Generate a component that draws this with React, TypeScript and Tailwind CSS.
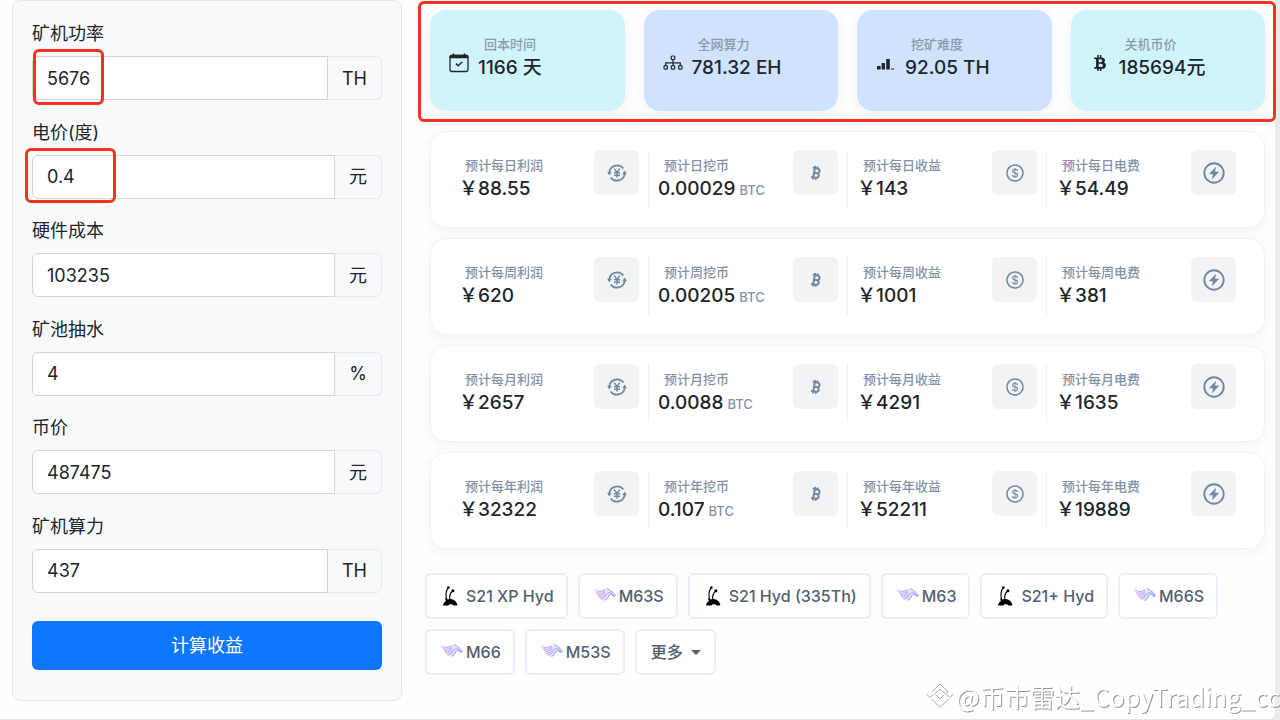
import { useState } from "react";
import type { ReactNode } from "react";
import { Bitcoin } from "lucide-react";
import { AiOutlineDollar } from "react-icons/ai";
import { FaBtc } from "react-icons/fa";

const CalendarIcon = () => (
	<svg viewBox="0 0 20 20" className="w-5 h-5" fill="none" stroke="currentColor">
		<rect x="1" y="2.5" width="18" height="16" rx="1.8" strokeWidth="1.3" />
		<path d="M.6 5.200V3.500Q.6 1.800 2.300 1.800h15.400q1.700 0 1.700 1.700v1.700z" fill="currentColor" stroke="none" />
		<path d="M4.500.6v2M15.500.6v2" strokeWidth="1.6" />
		<path d="m7 10.600 2.200 2.200L13.200 9" strokeWidth="1.5" />
	</svg>
);

const NetworkIcon = () => (
	<svg viewBox="0 0 20 20" className="w-5 h-5" fill="none" stroke="currentColor" strokeWidth="1.2">
		<rect x="8.2" y="3" width="3.6" height="3.6" rx="1" />
		<path d="M10 6.600v6M2.700 12.600V9.800h14.600v2.800" />
		<rect x="1" y="12.6" width="3.4" height="3.6" rx="1" />
		<rect x="8.3" y="12.6" width="3.4" height="3.6" rx="1" />
		<rect x="15.6" y="12.6" width="3.4" height="3.6" rx="1" />
	</svg>
);

const SignalIcon = () => (
	<svg viewBox="0 0 20 20" className="w-5 h-5" fill="currentColor">
		<path d="M1 13h3.600v3.500H1zM5.600 10H9v6.500H5.600zM10.200 6h3.600v10.500h-3.600zM15 15.500h3.200v1H15z" />
	</svg>
);

const YenCycleIcon = () => (
	<svg viewBox="0 0 20 20" className="w-5 h-5" fill="none" stroke="currentColor" strokeWidth="1.7">
		<path d="M2.300 10.500A7.800 7.800 0 0 1 16.400 5.600M17.700 9.500A7.800 7.800 0 0 1 3.600 14.400" />
		<path d="m.2 8.800 2 3.800L4.800 8.800zM19.800 11.200l-2-3.800-2.600 3.800z" fill="currentColor" stroke="none" />
		<path d="m7.200 5.600 2.800 3.800 2.800-3.800M10 9.400v5.200M7 9.800h6M7 12.200h6" strokeWidth="1.5" />
	</svg>
);

const PowerIcon = () => (
	<svg viewBox="0 0 22 22" className="w-[22px] h-[22px]" fill="none" stroke="currentColor">
		<circle cx="11" cy="11" r="9.7" strokeWidth="1.9" />
		<path d="M13 4.800 5.800 12.200h4.100L9 17.200l7.200-7.400h-4.100z" fill="currentColor" stroke="none" />
	</svg>
);

const AntLogo = () => (
	<svg viewBox="0 0 22 22" className="w-[22px] h-[22px] shrink-0" fill="none" stroke="#000">
		<path d="M7.200 2.800C4.800 5.500 4.400 9.500 5.600 15M11.700 6C9 8.200 8.300 11.500 8.800 15" strokeWidth="1.1" />
		<circle cx="7.4" cy="2.600" r="1.300" fill="#000" stroke="none" />
		<circle cx="11.900" cy="5.800" r="1.500" fill="#000" stroke="none" />
		<path
			d="M2 20.500c.2-2.200 1.500-3.800 3-4.600-.7-1-.9-2-.4-3.200 1 1.500 2.400 1.700 3.700 1.300 3.600-.4 7 1.800 8 5.600l-.2.900h-3.600c-1-1.600-4-1.800-5.300 0z"
			fill="#000"
			stroke="none"
		/>
	</svg>
);

const HorseLogo = () => (
	<svg viewBox="0 0 22 14" className="w-[22px] h-[14px] shrink-0 mb-1" fill="none" strokeWidth=".8">
		<defs>
			<linearGradient id="mane" x1="0" y1="0" x2="1" y2="0">
				<stop offset="0" stopColor="#d99bf0" />
				<stop offset="1" stopColor="#7f8df8" />
			</linearGradient>
		</defs>
		<path
			d="M.5 2.500C4 5 6.500 3.800 9.500 2l2-.8.8.8 1.700-1.500.2 2L18 3.800l1.500 2 2 2.400-1 1.500-3.300-2.100c-1.600-.4-2.300.8-3 2.500-.7 2.100-2.400 3.400-4.600 3.400C5.500 13.200 2.500 8.500.5 2.500z"
			fill="url(#mane)"
			fillOpacity=".25"
		/>
		<path
			d="M.5 2.500C4 5.500 8 4.700 11 3M1.600 5c3 2 6.600 1.600 9.400-.5M3 7.500c3 1.400 6 .6 8.500-1.600M4.500 9.700c3 .9 5.300 0 7-2.200M6.500 11.700c2.500.2 4.500-1 5.500-3.200 1-2.200 2.800-3.400 5-2.800l3.400 3.700"
			stroke="url(#mane)"
		/>
		<path d="M13 1.500 16.500 3.500 19 5.500l2.400 2.800-.9 1.400-3.300-2.200c-1.600-.4-2.300.8-3 2.500-.6 1.800-1.800 3-4 3.300" stroke="#8a97f8" strokeWidth=".9" />
	</svg>
);

const fields = [
	{ id: "power", label: "矿机功率", value: "5676", unit: "TH", mark: "left-px -top-[7px] w-[71px] h-[56px]" },
	{ id: "price", label: "电价(度)", value: "0.4", unit: "元", mark: "-left-[7px] -top-[7px] w-[91px] h-[55px]" },
	{ id: "hardware", label: "硬件成本", value: "103235", unit: "元" },
	{ id: "pool", label: "矿池抽水", value: "4", unit: "%" },
	{ id: "coin", label: "币价", value: "487475", unit: "元" },
	{ id: "hashrate", label: "矿机算力", value: "437", unit: "TH" },
];

const stats = [
	{ label: "回本时间", value: "1166 天", color: "bg-[#cff4fc]", icon: <CalendarIcon /> },
	{ label: "全网算力", value: "781.32 EH", color: "bg-[#cfe2ff]", icon: <NetworkIcon /> },
	{ label: "挖矿难度", value: "92.05 TH", color: "bg-[#cfe2ff]", icon: <SignalIcon /> },
	{ label: "关机币价", value: "185694元", color: "bg-[#cff4fc]", icon: <FaBtc className="w-5 h-4" /> },
];

const periods = [
	{ name: "日", each: "每日", profit: "88.55", coins: "0.00029", income: "143", cost: "54.49" },
	{ name: "周", each: "每周", profit: "620", coins: "0.00205", income: "1001", cost: "381" },
	{ name: "月", each: "每月", profit: "2657", coins: "0.0088", income: "4291", cost: "1635" },
	{ name: "年", each: "每年", profit: "32322", coins: "0.107", income: "52211", cost: "19889" },
];

const miners = [
	{ name: "S21 XP Hyd", ant: true },
	{ name: "M63S" },
	{ name: "S21 Hyd (335Th)", ant: true },
	{ name: "M63" },
	{ name: "S21+ Hyd", ant: true },
	{ name: "M66S" },
	{ name: "M66" },
	{ name: "M53S" },
];

const minerButton =
	"h-[46px] pl-[14px] pr-3 flex items-center rounded-md border-2 border-[#ececff] bg-white text-base font-medium text-[#506173]";

const Highlight = ({ className }: { className: string }) => (
	<span className={`absolute z-10 pointer-events-none rounded-md border-3 border-[#fc3020] ${className}`} />
);

type CellProps = { label: string; value: string; unit?: string; icon: ReactNode };

const Cell = ({ label, value, unit, icon }: CellProps) => (
	<div className="flex justify-between items-start pl-[9px] pr-[9px] border-r border-[#edf0f6] last:border-r-0 last:pr-[10px] h-[58px]">
		<div className="pt-[5px] whitespace-nowrap">
			<p className="pl-[6px] text-[13px] leading-5 font-medium text-[#8492a6]">{label}</p>
			<p className="text-[19px] leading-7 font-medium text-[#212529]">
				{value}
				{unit && <span className="ml-1 text-[13px] text-[#8492a6]">{unit}</span>}
			</p>
		</div>
		<span className="w-[45px] h-[45px] shrink-0 flex items-center justify-center rounded-md bg-[#f1f3f5] text-[#7188a2]">
			{icon}
		</span>
	</div>
);

const Calculator = () => {
	const [values, setValues] = useState<Record<string, string>>(
		Object.fromEntries(fields.map((f) => [f.id, f.value]))
	);

	return (
		<form
			onSubmit={(e) => e.preventDefault()}
			className="flex flex-col px-[19px] pt-[19px] pb-[30px] rounded-lg border border-[#e3e6ea] bg-[#f8f9fb]"
		>
			<div className="flex-1 flex flex-col justify-between">
				{fields.map((f) => (
					<div key={f.id}>
						<label htmlFor={f.id} className="block mb-2 text-lg leading-7 text-[#212529]">
							{f.label}
						</label>
						<div className="relative flex h-11 text-lg text-[#212529]">
							<input
								id={f.id}
								value={values[f.id]}
								onChange={(e) => setValues({ ...values, [f.id]: e.target.value })}
								className="flex-1 min-w-0 px-[14px] pt-px rounded-l-md border border-[#d3d7db] bg-white"
							/>
							<span className="flex items-center px-[14px] pt-px rounded-r-md border border-l-0 border-[#e6e9ed]">
								{f.unit}
							</span>
							{f.mark && <Highlight className={f.mark} />}
						</div>
					</div>
				))}
			</div>
			<button type="submit" className="mt-7 h-[49px] rounded-md bg-[#0f77fd] text-lg text-white">
				计算收益
			</button>
		</form>
	);
};

const Watermark = () => (
	<div className="absolute right-0 bottom-[6px] z-20 flex items-center gap-[2px] pointer-events-none text-white">
		<svg viewBox="0 0 28 28" className="w-7 h-7" fill="none" stroke="#a8a8a8" strokeWidth="1">
			<path d="m6 9.500 8-7.500 8 7.500-2.500 2.500L14 7l-5.500 5M10 13l4 4 4-4M.5 12l3.500 3.500L7.500 12M20.500 12l3.500 3.500 3.500-3.500M5.500 17l8.500 8.500 8.500-8.500" />
		</svg>
		<span className="font-['Noto_Sans_CJK_SC',sans-serif] text-[25px] leading-9 whitespace-nowrap drop-shadow-[1px_1px_0px_#9a9a9a]">
			@币市雷达_CopyTrading_cc
		</span>
	</div>
);

export default function App() {
	return (
		<div className="relative min-h-screen flex bg-[#ebebeb] overflow-hidden font-[Inter,'Noto_Sans_CJK_SC',sans-serif]">
			<main className="flex-1 mr-[5px] grid grid-cols-[390px_1fr] gap-4 pl-3 pb-[18px] rounded-br-md border-b border-[#e4e4e4] bg-[#fefefe]">
				<Calculator />

				<div className="relative pt-[10px]">
					<Highlight className="left-0 -right-px top-px h-[121px]" />

					<div className="grid grid-cols-4 gap-[19px] pl-3 pr-[10px]">
						{stats.map((s) => (
							<div
								key={s.label}
								className={`flex pl-[19px] pt-6 h-[101px] rounded-2xl shadow-[0_2px_12px_rgba(60,80,120,0.08)] ${s.color}`}
							>
								<span className="w-5 h-5 mt-[19px] mr-[9px] flex items-center justify-center text-[#212529]">{s.icon}</span>
								<div className="whitespace-nowrap">
									<p className="pl-[6px] text-[13px] leading-5 font-medium text-[#8e9ba5]">{s.label}</p>
									<p className="text-[19px] leading-7 font-medium text-[#212529]">{s.value}</p>
								</div>
							</div>
						))}
					</div>

					<div className="mt-5 ml-3 mr-[10px] flex flex-col gap-[10px]">
						{periods.map((p) => (
							<section
								key={p.name}
								className="grid grid-cols-4 h-[97px] pl-[19px] pr-[18px] pt-[18px] rounded-2xl border border-[#f0f2f7] bg-white shadow-[0_4px_12px_rgba(60,80,120,0.06)]"
							>
								<Cell label={`预计${p.each}利润`} value={`￥${p.profit}`} icon={<YenCycleIcon />} />
								<Cell label={`预计${p.name}挖币`} value={p.coins} unit="BTC" icon={<Bitcoin size={16} strokeWidth={3} />} />
								<Cell label={`预计${p.each}收益`} value={`￥${p.income}`} icon={<AiOutlineDollar size={20} />} />
								<Cell label={`预计${p.each}电费`} value={`￥${p.cost}`} icon={<PowerIcon />} />
							</section>
						))}
					</div>

					<div className="mt-6 pl-[7px] flex flex-wrap gap-[10px]">
						{miners.map((m) => (
							<button key={m.name} type="button" className={minerButton}>
								{m.ant ? <AntLogo /> : <HorseLogo />}
								<span className="ml-[3px]">{m.name}</span>
							</button>
						))}
						<button type="button" className={minerButton}>
							更多
							<span className="ml-2 mr-px border-x-5 border-t-5 border-x-transparent border-t-[#506173]" />
						</button>
					</div>
				</div>
			</main>
			<Watermark />
		</div>
	);
}
